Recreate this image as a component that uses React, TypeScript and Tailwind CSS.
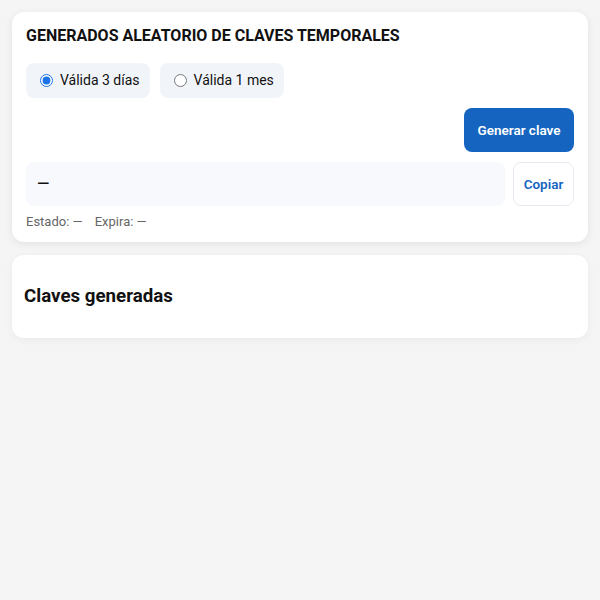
import { useState } from 'react'

export default function App() {
  const [plan, setPlan] = useState('3d')

  return (
    <div className="min-h-[600px] bg-[#f5f5f5] p-3 font-['Roboto',sans-serif] text-[#111]">
      {/* Generator card */}
      <section className="rounded-[12px] bg-white px-[14px] pt-[14px] pb-[11px] shadow-[0_2px_8px_rgba(0,0,0,0.08)]">
        <h2 className="text-[16px] leading-[20px] font-bold text-[#111]">
          GENERADOS ALEATORIO DE CLAVES TEMPORALES
        </h2>

        <div className="mt-[17px] flex gap-[10px]">
          <label className="flex h-[35px] items-center gap-[7px] rounded-[8px] bg-[#f1f5fa] pr-[10px] pl-[14px] text-[14px]">
            <input
              type="radio"
              name="plan"
              checked={plan === '3d'}
              onChange={() => setPlan('3d')}
              className="h-[13px] w-[13px] accent-[#1a73e8]"
            />
            Válida 3 días
          </label>
          <label className="flex h-[35px] items-center gap-[7px] rounded-[8px] bg-[#f1f5fa] pr-[10px] pl-[14px] text-[14px]">
            <input
              type="radio"
              name="plan"
              checked={plan === '1m'}
              onChange={() => setPlan('1m')}
              className="h-[13px] w-[13px] accent-[#1a73e8]"
            />
            Válida 1 mes
          </label>
        </div>

        <div className="mt-[10px] flex justify-end">
          <button className="h-[44px] w-[110px] rounded-[8px] bg-[#1565c0] text-[13.5px] font-semibold text-white">
            Generar clave
          </button>
        </div>

        <div className="mt-[10px] flex gap-[8px]">
          <div className="flex h-[44px] flex-1 items-center rounded-[8px] bg-[#f7f9fc] px-[11px] text-[16px] font-medium">
            —
          </div>
          <button className="h-[44px] w-[61px] rounded-[8px] border border-[#e6ebf1] bg-white text-[13.5px] font-semibold text-[#1565c0]">
            Copiar
          </button>
        </div>

        <div className="mt-[7px] flex gap-[12px] text-[13px] leading-[18px] text-[#666]">
          <span>Estado: —</span>
          <span>Expira: —</span>
        </div>
      </section>

      {/* Generated keys card */}
      <section className="mt-[13px] rounded-[12px] bg-white px-3 py-[31px] shadow-[0_2px_8px_rgba(0,0,0,0.05)]">
        <h3 className="text-[18.72px] leading-[21px] font-bold text-[#111]">Claves generadas</h3>
      </section>
    </div>
  )
}
